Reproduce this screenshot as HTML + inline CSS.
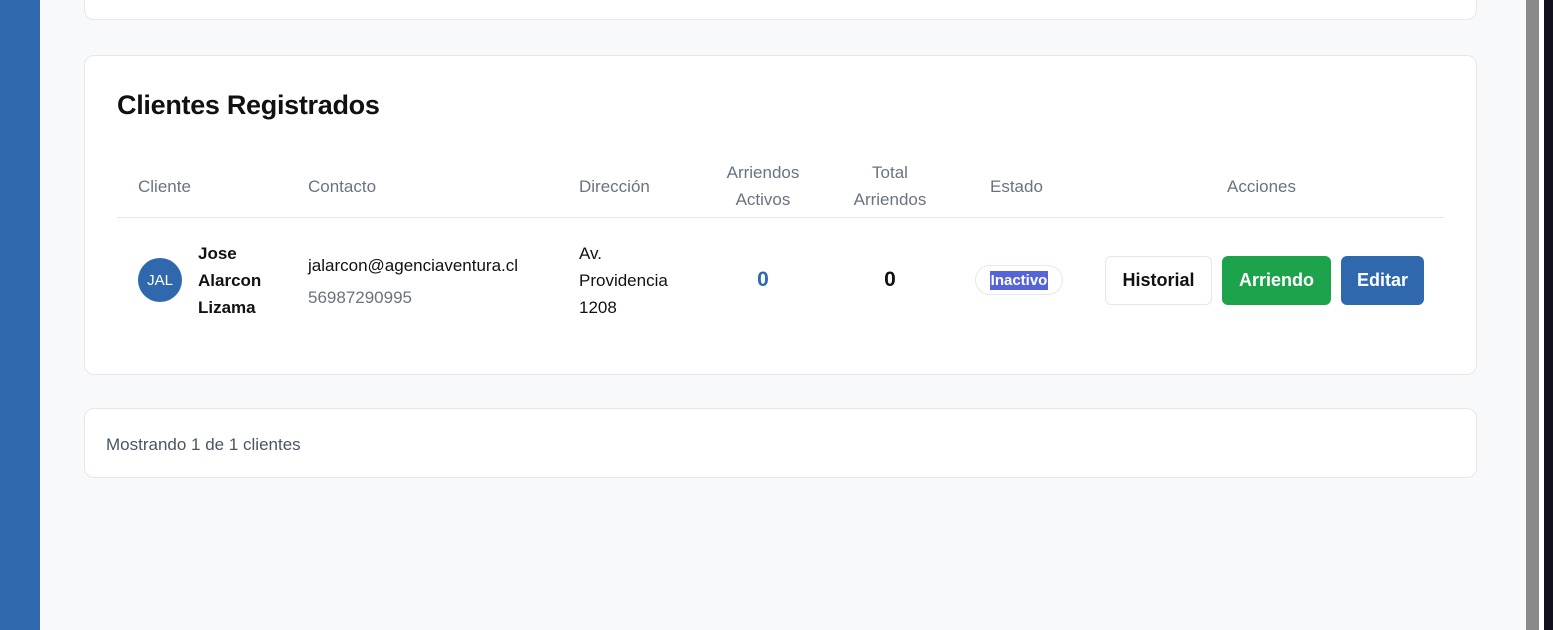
<!DOCTYPE html>
<html><head><meta charset="utf-8"><style>
*{box-sizing:border-box;margin:0;padding:0}
body{width:1553px;height:630px;overflow:hidden;background:#f8f9fb;font-family:"Liberation Sans",sans-serif;position:relative}
.side{position:absolute;left:0;top:0;width:40px;height:630px;background:#2f68ad}
.sb{position:absolute;left:1526px;top:0;width:13px;height:630px;background:#8a8a8a}
.sw{position:absolute;left:1539px;top:0;width:5px;height:630px;background:#fff}
.sd{position:absolute;left:1544px;top:0;width:9px;height:630px;background:#10111b}
.card{position:absolute;left:84px;width:1393px;background:#fff;border:1px solid #e5e7eb;border-radius:10px}
h2{position:absolute;left:32px;top:34px;font-size:27px;font-weight:bold;color:#111;letter-spacing:-0.3px}
.th{position:absolute;color:#6b7280;font-size:17px;text-align:center;line-height:27px}
.line{position:absolute;left:32px;right:32px;top:161px;border-top:1px solid #e5e7eb}
.t{position:absolute;font-size:17px;color:#111;line-height:27px}
.btn{position:absolute;top:200px;height:49px;border-radius:6px;font-size:18px;font-weight:bold;display:flex;align-items:center;justify-content:center}
</style></head><body>
<div class="side"></div>
<div class="card" style="top:-20px;height:40px"></div>
<div class="card" style="top:55px;height:320px">
<h2>Clientes Registrados</h2>
<div class="th" style="left:53px;top:117px">Cliente</div>
<div class="th" style="left:223px;top:117px">Contacto</div>
<div class="th" style="left:494px;top:117px">Dirección</div>
<div class="th" style="left:628px;top:103px;width:100px">Arriendos<br>Activos</div>
<div class="th" style="left:755px;top:103px;width:100px">Total<br>Arriendos</div>
<div class="th" style="left:905px;top:117px">Estado</div>
<div class="th" style="left:1142px;top:117px">Acciones</div>
<div class="line"></div>
<div style="position:absolute;left:53px;top:202px;width:44px;height:44px;border-radius:50%;background:#2f68ad;color:#fff;font-size:15px;display:flex;align-items:center;justify-content:center">JAL</div>
<div class="t" style="left:113px;top:184px;font-weight:bold">Jose<br>Alarcon<br>Lizama</div>
<div class="t" style="left:223px;top:196px">jalarcon@agenciaventura.cl</div>
<div class="t" style="left:223px;top:228px;color:#6b7280">56987290995</div>
<div class="t" style="left:494px;top:184px">Av.<br>Providencia<br>1208</div>
<div class="t" style="left:628px;top:210px;width:100px;text-align:center;font-size:21px;font-weight:bold;color:#2f68ad">0</div>
<div class="t" style="left:755px;top:210px;width:100px;text-align:center;font-size:21px;font-weight:bold">0</div>
<div style="position:absolute;left:890px;top:209px;width:88px;height:30px;border:1px solid #e5e7eb;border-radius:15px;display:flex;align-items:center;justify-content:center"><span style="background:#5564d6;color:#fff;font-size:15px;font-weight:bold;padding:1px 1px">Inactivo</span></div>
<div class="btn" style="left:1020px;width:107px;border:1px solid #e5e7eb;color:#111">Historial</div>
<div class="btn" style="left:1137px;width:109px;background:#1ea34d;color:#fff">Arriendo</div>
<div class="btn" style="left:1256px;width:83px;background:#2f68ad;color:#fff">Editar</div>
</div>
<div class="card" style="top:408px;height:70px"><div class="t" style="left:21px;top:22px;color:#4b5563">Mostrando 1 de 1 clientes</div></div>
<div class="sb"></div><div class="sw"></div><div class="sd"></div>
</body></html>
